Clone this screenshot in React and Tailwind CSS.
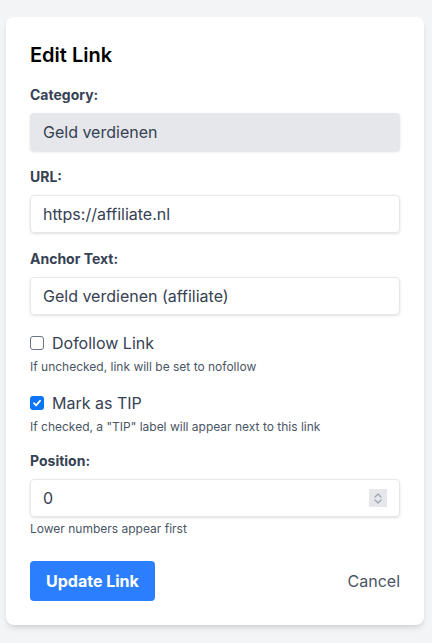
export default function App() {
  const font = { fontFamily: "Inter, 'Noto Sans', sans-serif" };
  return (
    <div className="min-h-[643px] bg-gray-100 pl-[6px] pr-[8px] pt-[17px] pb-4" style={font}>
      <div className="bg-white rounded-lg shadow-md p-6">
        <h2 className="text-xl leading-7 font-semibold text-black mb-4">Edit Link</h2>

        <div className="mb-4">
          <div className="block text-gray-700 text-sm leading-5 font-bold mb-2">Category:</div>
          <div className="h-[38px] flex items-center px-[13px] rounded bg-gray-200 shadow-sm text-base text-gray-700">
            Geld verdienen
          </div>
        </div>

        <div className="mb-4">
          <div className="block text-gray-700 text-sm leading-5 font-bold mb-2">URL:</div>
          <div className="h-[38px] flex items-center px-3 rounded border border-gray-200 shadow-sm text-base text-gray-700">
            https://affiliate.nl
          </div>
        </div>

        <div className="mb-4">
          <div className="block text-gray-700 text-sm leading-5 font-bold mb-2">Anchor Text:</div>
          <div className="h-[38px] flex items-center px-3 rounded border border-gray-200 shadow-sm text-base text-gray-700">
            Geld verdienen (affiliate)
          </div>
        </div>

        <div className="mb-4">
          <div className="flex items-center gap-2 h-6">
            <span className="w-[14px] h-[14px] rounded-[3px] border-[1.5px] border-gray-500 bg-white"></span>
            <span className="text-base text-gray-700">Dofollow Link</span>
          </div>
          <p className="mt-1 text-xs leading-4 text-gray-600">If unchecked, link will be set to nofollow</p>
        </div>

        <div className="mb-4">
          <div className="flex items-center gap-2 h-6">
            <span className="w-[14px] h-[14px] rounded-[3px] bg-[#0b74f7] flex items-center justify-center">
              <svg width="10" height="10" viewBox="0 0 10 10" fill="none">
                <path d="M2 5.2 L4.1 7.3 L8 2.8" stroke="white" strokeWidth="1.8" strokeLinecap="round" strokeLinejoin="round" />
              </svg>
            </span>
            <span className="text-base text-gray-700">Mark as TIP</span>
          </div>
          <p className="mt-1 text-xs leading-4 text-gray-600">If checked, a "TIP" label will appear next to this link</p>
        </div>

        <div className="mb-6">
          <div className="block text-gray-700 text-sm leading-5 font-bold mb-2">Position:</div>
          <div className="h-[38px] flex items-center justify-between pl-3 pr-3 rounded border border-gray-200 shadow-sm text-base text-gray-700">
            <span>0</span>
            <span className="w-[18px] h-[18px] bg-gray-200 flex flex-col items-center justify-center gap-[1px]">
              <svg width="8" height="5" viewBox="0 0 8 5" fill="none">
                <path d="M1 4 L4 1 L7 4" stroke="#9ca3af" strokeWidth="1.2" strokeLinecap="round" strokeLinejoin="round" />
              </svg>
              <svg width="8" height="5" viewBox="0 0 8 5" fill="none">
                <path d="M1 1 L4 4 L7 1" stroke="#9ca3af" strokeWidth="1.2" strokeLinecap="round" strokeLinejoin="round" />
              </svg>
            </span>
          </div>
          <p className="mt-1 text-xs leading-4 text-gray-600">Lower numbers appear first</p>
        </div>

        <div className="flex items-center justify-between">
          <button className="bg-blue-500 text-white font-bold py-2 px-4 rounded text-base leading-6">Update Link</button>
          <span className="text-base text-gray-600">Cancel</span>
        </div>
      </div>
    </div>
  );
}
